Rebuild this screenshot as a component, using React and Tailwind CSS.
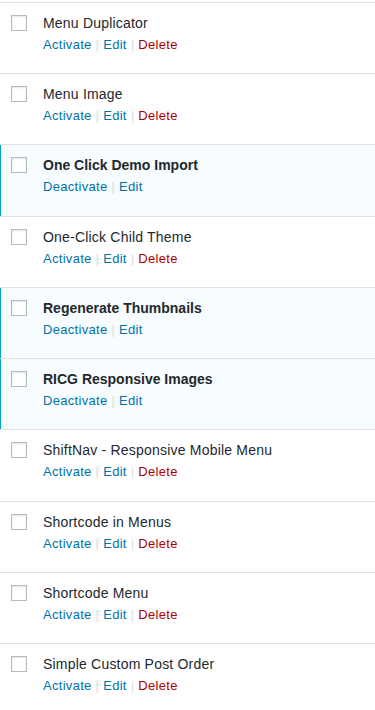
import React from "react";

const plugins = [
  { name: "Menu Duplicator", active: false },
  { name: "Menu Image", active: false },
  { name: "One Click Demo Import", active: true },
  { name: "One-Click Child Theme", active: false },
  { name: "Regenerate Thumbnails", active: true },
  { name: "RICG Responsive Images", active: true },
  { name: "ShiftNav - Responsive Mobile Menu", active: false },
  { name: "Shortcode in Menus", active: false },
  { name: "Shortcode Menu", active: false },
  { name: "Simple Custom Post Order", active: false },
];

function Row({ p }) {
  return (
    <div
      className={
        "flex h-[71.22px] border-t border-[#e1e1e1] " +
        (p.active ? "bg-[#f7fcfe]" : "bg-white")
      }
    >
      <div className={"w-px shrink-0 " + (p.active ? "bg-[#00a0d2]" : "")} />
      <div className="pl-[10px] pt-[12px] shrink-0">
        <div className="w-4 h-4 border border-[#b4b9be] bg-white shadow-[inset_0_1px_2px_rgba(0,0,0,0.1)]" />
      </div>
      <div className="pl-[16px] pt-[10px]">
        <div
          className={
            "text-[14px] leading-[20px] text-[#23282d] " +
            (p.active ? "font-bold" : "tracking-[0.2px]")
          }
        >
          {p.name}
        </div>
        <div className="text-[13px] leading-[18px] mt-[3px] tracking-[0.3px]">
          {p.active ? (
            <>
              <span className="text-[#0073aa]">Deactivate</span>
              <span className="text-[#ddd]"> | </span>
              <span className="text-[#0073aa]">Edit</span>
            </>
          ) : (
            <>
              <span className="text-[#0073aa]">Activate</span>
              <span className="text-[#ddd]"> | </span>
              <span className="text-[#0073aa]">Edit</span>
              <span className="text-[#ddd]"> | </span>
              <span className="text-[#a00]">Delete</span>
            </>
          )}
        </div>
      </div>
    </div>
  );
}

export default function App() {
  return (
    <div
      className="w-[375px] h-[710px] overflow-hidden bg-white"
      style={{ fontFamily: '"Liberation Sans", Arial, sans-serif' }}
    >
      <div className="h-[2px] bg-white" />
      {plugins.map((p) => (
        <Row key={p.name} p={p} />
      ))}
    </div>
  );
}
